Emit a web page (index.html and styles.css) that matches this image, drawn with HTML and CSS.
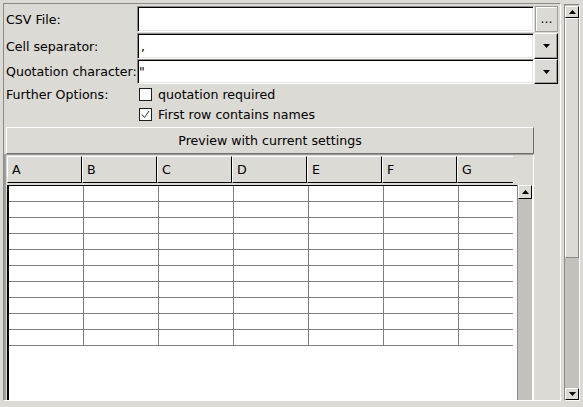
FILE: index.html
```html
<!DOCTYPE html>
<html>
<head>
<meta charset="utf-8">
<link rel="stylesheet" href="styles.css">
</head>
<body>
<div class="window">
  <div class="main">
    <div class="frame">
      <div class="form">
        <div class="row r1">
          <div class="label">CSV File:</div>
          <div class="entry"></div>
          <div class="btn dots">...</div>
        </div>
        <div class="row r2">
          <div class="label">Cell separator:</div>
          <div class="entry">,</div>
          <div class="btn drop"><svg width="7" height="4" viewBox="0 0 7 4"><polygon points="0,0 7,0 3.5,4" fill="#000"/></svg></div>
        </div>
        <div class="row r3">
          <div class="label">Quotation character:</div>
          <div class="entry entry-tight">"</div>
          <div class="btn drop"><svg width="7" height="4" viewBox="0 0 7 4"><polygon points="0,0 7,0 3.5,4" fill="#000"/></svg></div>
        </div>
        <div class="row opt">
          <div class="label">Further Options:</div>
          <div class="check"><span class="box"></span>quotation required</div>
        </div>
        <div class="row opt">
          <div class="label"></div>
          <div class="check"><span class="box"><svg width="11" height="11" viewBox="0 0 11 11"><polyline points="2,5.5 4.5,8.5 9,2" fill="none" stroke="#333" stroke-width="1"/></svg></span>First row contains names</div>
        </div>
        <div class="preview">Preview with current settings</div>
      </div>
      <div class="table">
        <div class="thead">
          <div class="th">A</div>
          <div class="th">B</div>
          <div class="th">C</div>
          <div class="th">D</div>
          <div class="th">E</div>
          <div class="th">F</div>
          <div class="th th-last">G</div>
        </div>
        <div class="tbody">
          <div class="grid">
            <div class="tr"><div class="td"></div><div class="td"></div><div class="td"></div><div class="td"></div><div class="td"></div><div class="td"></div><div class="td td-last"></div></div>
            <div class="tr"><div class="td"></div><div class="td"></div><div class="td"></div><div class="td"></div><div class="td"></div><div class="td"></div><div class="td td-last"></div></div>
            <div class="tr"><div class="td"></div><div class="td"></div><div class="td"></div><div class="td"></div><div class="td"></div><div class="td"></div><div class="td td-last"></div></div>
            <div class="tr"><div class="td"></div><div class="td"></div><div class="td"></div><div class="td"></div><div class="td"></div><div class="td"></div><div class="td td-last"></div></div>
            <div class="tr"><div class="td"></div><div class="td"></div><div class="td"></div><div class="td"></div><div class="td"></div><div class="td"></div><div class="td td-last"></div></div>
            <div class="tr"><div class="td"></div><div class="td"></div><div class="td"></div><div class="td"></div><div class="td"></div><div class="td"></div><div class="td td-last"></div></div>
            <div class="tr"><div class="td"></div><div class="td"></div><div class="td"></div><div class="td"></div><div class="td"></div><div class="td"></div><div class="td td-last"></div></div>
            <div class="tr"><div class="td"></div><div class="td"></div><div class="td"></div><div class="td"></div><div class="td"></div><div class="td"></div><div class="td td-last"></div></div>
            <div class="tr"><div class="td"></div><div class="td"></div><div class="td"></div><div class="td"></div><div class="td"></div><div class="td"></div><div class="td td-last"></div></div>
            <div class="tr"><div class="td"></div><div class="td"></div><div class="td"></div><div class="td"></div><div class="td"></div><div class="td"></div><div class="td td-last"></div></div>
          </div>
          <div class="tscroll">
            <div class="abtn tup"><svg width="7" height="4" viewBox="0 0 7 4"><polygon points="0,4 7,4 3.5,0" fill="#000"/></svg></div>
          </div>
        </div>
      </div>
    </div>
  </div>
  <div class="vscroll">
    <div class="abtn vup"><svg width="7" height="4" viewBox="0 0 7 4"><polygon points="0,4 7,4 3.5,0" fill="#000"/></svg></div>
    <div class="slider"></div>
    <div class="abtn vdown"><svg width="7" height="4" viewBox="0 0 7 4"><polygon points="0,0 7,0 3.5,4" fill="#000"/></svg></div>
  </div>
</div>
</body>
</html>
```
FILE: styles.css
```css
body {
  margin: 0;
  background: #dcdad5;
  font-family: "DejaVu Sans", sans-serif;
  font-size: 12.6px;
  color: #000;
  width: 583px;
  height: 407px;
  overflow: hidden;
}
.window {
  display: flex;
  height: 401px;
}
.main {
  width: 564px;
  padding: 3px 3px 0 3px;
  box-sizing: border-box;
  display: flex;
  flex: none;
}
.frame {
  flex: 1;
  display: flex;
  flex-direction: column;
  border: 1px solid;
  border-color: #8c8b87 #fff #fff #8c8b87;
  overflow: hidden;
}
.form {
  padding: 2px 2px 0 2px;
  display: flex;
  flex-direction: column;
}
.row {
  display: flex;
  align-items: stretch;
}
.r1 { height: 26px; }
.r2 { height: 26px; margin-top: 1px; }
.r3 { height: 25px; }
.label {
  width: 131px;
  flex: none;
  white-space: nowrap;
  display: flex;
  align-items: center;
}
.entry {
  width: 397px;
  flex: none;
  box-sizing: border-box;
  border: 1px solid;
  border-color: #8c8b87 #fff #fff #8c8b87;
  box-shadow: inset 1px 1px 0 #000, inset -1px -1px 0 #e6e5e1;
  background: #fff;
  display: flex;
  align-items: center;
  padding-left: 3px;
}
.entry-tight { padding-left: 1px; }
.btn {
  box-sizing: border-box;
  display: flex;
  align-items: center;
  justify-content: center;
  background: #dcdad5;
  flex: none;
}
.dots {
  width: 23px;
  margin-left: 1px;
  border: 1px solid #9e9d99;
  box-shadow: inset 1px 1px 0 #fff;
  padding-bottom: 2px;
}
.drop {
  width: 24px;
  border: 1px solid;
  border-color: #fff #000 #000 #fff;
  box-shadow: inset -1px -1px 0 #9e9d99;
}
.opt {
  height: 20px;
  align-items: center;
}
.check {
  display: flex;
  align-items: center;
  margin-left: 2px;
  white-space: nowrap;
}
.box {
  width: 13px;
  height: 13px;
  box-sizing: border-box;
  border: 1px solid #1e1e1e;
  background: #fff;
  margin-right: 6px;
  display: flex;
}
.preview {
  margin-top: 3px;
  width: 528px;
  height: 27px;
  box-sizing: border-box;
  border: 1px solid;
  border-color: #fff #6e6d6a #6e6d6a #fff;
  display: flex;
  align-items: center;
  justify-content: center;
}
.table {
  width: 530px;
  flex: 1;
  min-height: 0;
  box-sizing: border-box;
  border-top: 1px solid #9e9d99;
  border-left: 2px solid #9e9d99;
  border-right: 1px solid #fff;
  padding: 1px 0 0 1px;
  display: flex;
  flex-direction: column;
}
.thead {
  display: flex;
  height: 27px;
  flex: none;
}
.th {
  width: 75px;
  flex: none;
  box-sizing: border-box;
  border: 1px solid;
  border-color: #fff #000 #000 #fff;
  padding-left: 4px;
  display: flex;
  align-items: center;
}
.th-last {
  width: 56px;
  border-right: none;
}
.tbody {
  display: flex;
  flex: 1;
  margin-top: 2px;
  min-height: 0;
}
.grid {
  width: 510px;
  flex: none;
  box-sizing: border-box;
  border-left: 2px solid #000;
  border-top: 1px solid #000;
  background: #fff;
}
.tr {
  display: flex;
  width: 504px;
  height: 16px;
  box-sizing: border-box;
  border-bottom: 1px solid #808080;
}
.td {
  width: 75px;
  flex: none;
  box-sizing: border-box;
  border-right: 1px solid #808080;
}
.td-last {
  width: 54px;
  border-right: none;
}
.tscroll {
  width: 16px;
  flex: none;
  box-sizing: border-box;
  border-left: 1px solid #8c8b87;
  border-right: 1px solid #fff;
  background: #c3c1bb;
  display: flex;
  flex-direction: column;
}
.abtn {
  box-sizing: border-box;
  border: 1px solid;
  border-color: #fff #000 #000 #fff;
  background: #dcdad5;
  display: flex;
  align-items: center;
  justify-content: center;
  flex: none;
}
.tup { height: 14px; }
.vscroll {
  width: 16px;
  flex: none;
  margin-top: 4px;
  box-sizing: border-box;
  border: 1px solid;
  border-color: #8c8b87 #fff #fff #8c8b87;
  background: #c3c1bb;
  display: flex;
  flex-direction: column;
}
.vup { height: 12px; margin-top: 1px; }
.slider {
  height: 240px;
  flex: none;
  box-sizing: border-box;
  background: #dcdad5;
  border: 1px solid;
  border-color: #fff #8c8b87 #8c8b87 #fff;
}
.vdown { height: 12px; margin-top: auto; }
```
